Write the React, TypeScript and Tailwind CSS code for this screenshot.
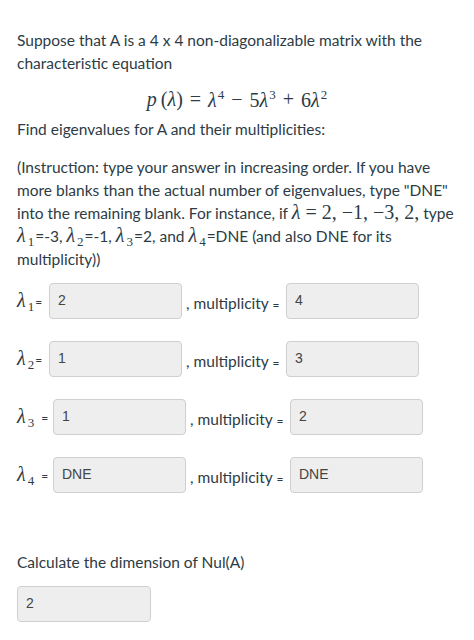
import React from "react";

function Lam({ sub }: { sub: string }) {
  return (
    <span className="font-['Liberation_Serif',serif] text-[20px] leading-none">
      <i className="mr-[2px]">λ</i>
      <span className="text-[13px] leading-none not-italic align-[-4px]">{sub}</span>
    </span>
  );
}

function Box({ v, w = "w-[133px]" }: { v: string; w?: string }) {
  return (
    <div className={`${w} h-[36px] shrink-0 rounded-[4px] border border-[#cfcfcf] bg-[#eeeeee] px-[8px] pt-[6px] font-['Liberation_Sans',Arial,sans-serif] text-[14px] leading-[20px] text-[#444]`}>
      {v}
    </div>
  );
}

function Row({ sub, v, m, sp }: { sub: string; v: string; m: string; sp?: boolean }) {
  return (
    <div className="flex items-center h-[36px]">
      <span className={`flex items-center ${sp ? "w-[36px]" : "w-[32px]"}`}>
        <Lam sub={sub} />
        <span className={`text-[12px] ${sp ? "ml-[7px]" : "ml-[1px]"}`}>=</span>
      </span>
      <Box v={v} />
      <span className="w-[104px] pl-[4px] mt-[6px] whitespace-nowrap">, multiplicity <span className="text-[12px]">=</span></span>
      <Box v={m} />
    </div>
  );
}

function Sup({ n }: { n: string }) {
  return <span className="text-[13px] leading-none align-[8px] ml-[1px]">{n}</span>;
}

export default function App() {
  return (
    <div className="w-[474px] h-[640px] bg-white px-[17px] pt-[29px] font-['Lato',sans-serif] text-[15.5px] leading-[23px] text-[#2d3b45]">
      <p>Suppose that A is a 4 x 4 non-diagonalizable matrix with the characteristic equation</p>
      <div className="flex justify-center mt-[11px] h-[26px] items-center font-['Liberation_Serif',serif] text-[20px] leading-none">
        <span><i>p</i>&thinsp;(<i>λ</i>)</span>
        <span className="mx-[7px]">=</span>
        <span><i>λ</i><Sup n="4" /></span>
        <span className="mx-[7px]">−</span>
        <span>5<i>λ</i><Sup n="3" /></span>
        <span className="mx-[7px]">+</span>
        <span>6<i>λ</i><Sup n="2" /></span>
      </div>
      <p className="mt-[6px]">Find eigenvalues for A and their multiplicities:</p>
      <p className="mt-[15px]">
        (Instruction: type your answer in increasing order. If you have more blanks than the actual number of eigenvalues, type "DNE" into the remaining blank. For instance, if{" "}
        <span className="font-['Liberation_Serif',serif] text-[20px] leading-none"><i>λ</i> = 2, −1, −3, 2,</span> type{" "}
        <Lam sub="1" /><span className="ml-[1px]">=-3,</span> <Lam sub="2" /><span className="ml-[1px]">=-1,</span> <Lam sub="3" /><span className="ml-[1px]">=2,</span> and <Lam sub="4" /><span className="ml-[1px]">=DNE</span> (and also DNE for its multiplicity))
      </p>
      <div className="mt-[12px] flex flex-col gap-[22px]">
        <Row sub="1" v="2" m="4" />
        <Row sub="2" v="1" m="3" />
        <Row sub="3" v="1" m="2" sp />
        <Row sub="4" v="DNE" m="DNE" sp />
      </div>
      <p className="mt-[58px]">Calculate the dimension of Nul(A)</p>
      <div className="mt-[12px]">
        <Box v="2" w="w-[134px]" />
      </div>
    </div>
  );
}
